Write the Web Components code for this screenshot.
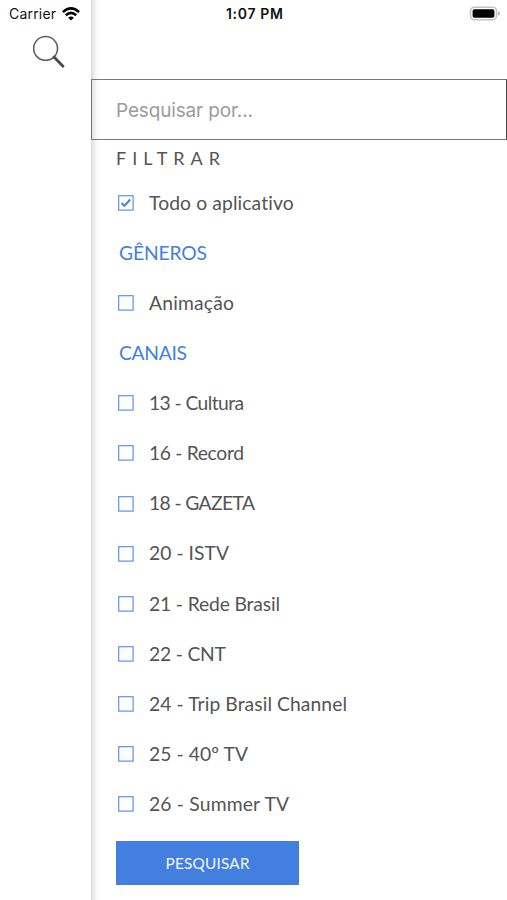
<!DOCTYPE html>
<html lang="pt-BR">
<head>
<meta charset="utf-8">
<title>Pesquisar</title>
<style>
html,body{margin:0;height:100%;background:#fff;overflow:hidden}
body{font-family:Lato,"Open Sans",sans-serif;color:#545454}
</style>
</head>
<body>
<search-screen></search-screen>
<script>
const define = (name, html, setup) => customElements.define(name, class extends HTMLElement {
  connectedCallback() {
    if (this.shadowRoot) return;
    const t = document.createElement('template');
    t.innerHTML = html;
    this.attachShadow({mode: 'open'}).append(t.content.cloneNode(true));
    if (setup) setup(this, this.shadowRoot);
  }
});

// Text tracked so that its line takes the width given in "w".
define('fit-text', `<style>
  :host{display:block;white-space:pre;line-height:1}
  span{display:inline-block}
</style><span></span>`, (host, root) => {
  const s = root.querySelector('span');
  s.textContent = host.getAttribute('text');
  const natural = s.getBoundingClientRect().width;
  const gaps = s.textContent.length - 1;
  const ls = (Number(host.getAttribute('w')) - natural) / gaps;
  s.style.letterSpacing = ls + 'px';
  s.style.marginRight = -ls + 'px';
});

define('status-bar', `<style>
  :host{display:grid;grid-template-columns:1fr auto 1fr;align-items:center;height:27px;padding:0 7px 0 9px;box-sizing:border-box;font-family:Inter,"Liberation Sans",sans-serif;font-size:14px;color:#111}
  .l{display:flex;align-items:center;gap:6px}
  .time{font-weight:600}
  .r{justify-self:end;display:flex}
  svg{display:block}
</style>
<div class="l"><fit-text text="Carrier" w="47"></fit-text>
<svg width="18" height="14" viewBox="0 0 18 14" fill="none" stroke="#000" stroke-width="2.5"><path d="M.9 5.1Q9-2.3 17.1 5.1"/><path d="M3.8 8.2Q9 3.6 14.2 8.2"/><path d="M9 13.6L6.1 10.7Q9 8.5 11.9 10.7Z" fill="#000" stroke="none"/></svg></div>
<fit-text class="time" text="1:07 PM" w="57"></fit-text>
<div class="r"><svg width="31" height="16" viewBox="0 0 31 16"><rect x="1.5" y="1.2" width="26" height="12.6" rx="4" fill="#fff" stroke="#c2c2c2" stroke-width="1.6"/><rect x="3.6" y="3.3" width="21.8" height="8.4" rx="1.8" fill="#000"/><path d="M29 5.2Q31 5.8 31 7.5T29 9.8Z" fill="#b5b5b5"/></svg></div>`);

define('side-rail', `<style>
  :host{display:block;width:91px;padding:8px 0 0 32px;box-sizing:border-box}
  svg{display:block}
</style>
<svg width="34" height="34" viewBox="0 0 34 34" fill="none"><circle cx="13.6" cy="13.4" r="11.9" stroke="#626262" stroke-width="1.6"/><path d="M22 22L31 31.3" stroke="#4c4c4c" stroke-width="2.8" stroke-linecap="round"/></svg>`);

define('search-field', `<style>
  :host{display:flex;align-items:center;height:61px;box-sizing:border-box;border:1px solid #777;border-right-color:#444;padding:1px 0 0 24px;font:19px Inter,"Liberation Sans",sans-serif;color:#9b9b9b}
</style><slot></slot>`);

define('check-row', `<style>
  :host{display:flex;align-items:center;height:50.08px;padding-left:27px;font-size:19.3px}
  svg{display:block;flex:none;margin-right:15px}
  path{display:none}
  slot{display:block;padding-bottom:1px}
  :host([checked]) path{display:block}
</style>
<svg width="16" height="16" viewBox="0 0 16 16" fill="none"><rect x=".7" y=".7" width="14.4" height="14.4" stroke="#5c93e8" stroke-width="1.2"/><path d="M3.5 8L6.4 10.9L12.2 4.5" stroke="#3f7fe0" stroke-width="2"/></svg>
<slot></slot>`);

define('group-title', `<style>
  :host{display:flex;align-items:center;height:50.08px;padding:0 0 1px 28px;box-sizing:border-box;font-size:19.3px;color:#437fdf}
</style><slot></slot>`);

define('search-button', `<style>
  :host{display:flex;align-items:center;justify-content:center;width:183px;height:44px;padding-top:1px;box-sizing:border-box;margin:12px 0 0 25px;background:#437fdf;color:#f4f8ff;font-size:15.3px}
</style><slot></slot>`);

define('filter-panel', `<style>
  :host{display:block;flex:1;padding-top:52px;background:linear-gradient(90deg,#dcdcdc 0,#ececec 3px,#fafafa 6px,#fff 9px);margin-top:-27px}
  .top{height:27px}
  .h{height:38px;display:flex;align-items:center;padding:0 0 2px 25px;box-sizing:border-box;font-size:18px}
</style>
<div class="top"></div>
<search-field><fit-text text="Pesquisar por..." w="137"></fit-text></search-field>
<div class="h"><fit-text text="FILTRAR" w="104"></fit-text></div>
<div class="list"></div>
<search-button><fit-text text="PESQUISAR" w="84"></fit-text></search-button>`, (host, root) => {
  const rows = [
    ['Todo o aplicativo', 145, 1], ['GÊNEROS', 88, 2], ['Animação', 85], ['CANAIS', 68, 2],
    ['13 - Cultura', 95], ['16 - Record', 95], ['18 - GAZETA', 106], ['20 - ISTV', 80],
    ['21 - Rede Brasil', 131], ['22 - CNT', 77], ['24 - Trip Brasil Channel', 198],
    ['25 - 40º TV', 99], ['26 - Summer TV', 140]
  ];
  root.querySelector('.list').innerHTML = rows.map(([t, w, kind]) => {
    const tag = kind === 2 ? 'group-title' : 'check-row';
    return `<${tag}${kind === 1 ? ' checked' : ''}><fit-text text="${t}" w="${w}"></fit-text></${tag}>`;
  }).join('');
});

define('search-screen', `<style>
  :host{display:flex;flex-direction:column;height:900px;width:507px;overflow:hidden}
  status-bar{position:relative;z-index:1;flex:none}
  .body{display:flex;flex:1;min-height:0}
</style>
<status-bar></status-bar>
<div class="body"><side-rail></side-rail><filter-panel></filter-panel></div>`);
</script>
</body>
</html>
